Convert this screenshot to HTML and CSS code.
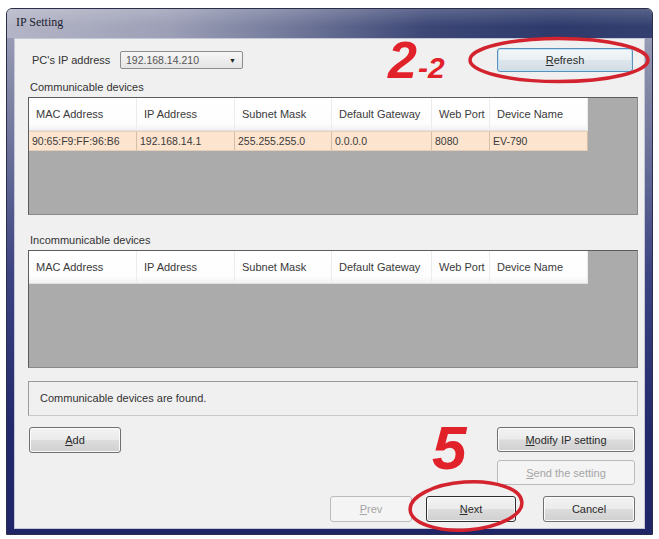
FILE: index.html
```html
<!DOCTYPE html>
<html>
<head>
<meta charset="utf-8">
<link rel="stylesheet" href="styles.css">
</head>
<body>
<div class="page">
  <div class="window">
    <div class="titlebar"><span class="title">IP Setting</span></div>
    <div class="client">
      <div class="toprow">
        <span class="lbl">PC's IP address</span>
        <div class="combo"><span>192.168.14.210</span><span class="arrow">&#9660;</span></div>
        <button class="btn refresh"><u>R</u>efresh</button>
      </div>
      <div class="section-label">Communicable devices</div>
      <div class="list">
        <div class="grid header">
          <div>MAC Address</div><div>IP Address</div><div>Subnet Mask</div><div>Default Gateway</div><div>Web Port</div><div>Device Name</div>
        </div>
        <div class="grid row">
          <div>90:65:F9:FF:96:B6</div><div>192.168.14.1</div><div>255.255.255.0</div><div>0.0.0.0</div><div>8080</div><div>EV-790</div>
        </div>
      </div>
      <div class="section-label second">Incommunicable devices</div>
      <div class="list">
        <div class="grid header">
          <div>MAC Address</div><div>IP Address</div><div>Subnet Mask</div><div>Default Gateway</div><div>Web Port</div><div>Device Name</div>
        </div>
      </div>
      <div class="status">Communicable devices are found.</div>
      <div class="actions">
        <button class="btn add"><u>A</u>dd</button>
        <div class="side">
          <button class="btn wide"><u>M</u>odify IP setting</button>
          <button class="btn wide" disabled><u>S</u>end the setting</button>
        </div>
      </div>
      <div class="nav">
        <button class="btn prev" disabled><u>P</u>rev</button>
        <button class="btn next"><u>N</u>ext</button>
        <button class="btn cancel">Cancel</button>
      </div>
    </div>
  </div>
  <svg class="ring ring1" width="184" height="48" viewBox="0 0 184 48"><ellipse cx="92" cy="24" rx="89" ry="21.5" fill="none" stroke="#d3232e" stroke-width="3.5"/></svg>
  <svg class="ring ring2" width="120" height="56" viewBox="0 0 120 56"><ellipse cx="60" cy="28" rx="56" ry="24" fill="none" stroke="#d3232e" stroke-width="3.5" transform="rotate(-4 60 28)"/></svg>
  <div class="anno a22">2<span class="small">-2</span></div>
  <div class="anno a5">5</div>
</div>
</body>
</html>
```

FILE: styles.css
```css
* { box-sizing: border-box; }
html, body { margin: 0; padding: 0; background: #ffffff; }
body { font-family: "Liberation Sans", Arial, sans-serif; font-size: 11px; color: #2a2a2a; }
.page { position: relative; width: 659px; height: 539px; overflow: hidden; }

.window {
  width: 647px;
  height: 527px;
  margin: 8px 0 0 6px;
  border: 1px solid #2b2e48;
  border-radius: 6px 6px 0 0;
  background: linear-gradient(#a3a6bc 0%, #7d82a3 18%, #3d4482 50%, #232a6c 80%, #1f2566 100%);
  padding: 0 7px 5px 7px;
  display: flex;
  flex-direction: column;
}
.titlebar {
  height: 29px;
  margin: 0 -7px;
  padding: 6px 0 0 9px;
  border-radius: 5px 5px 0 0;
  background:
    linear-gradient(rgba(255,255,255,0.18), rgba(255,255,255,0) 60%),
    linear-gradient(to right, #b4b5c6 0%, #9c9fb6 25%, #6f7698 45%, #3c4776 65%, #2d3a6b 85%, #33406f 100%);
}
.title { font-size: 12px; color: #1c1c30; font-family: "Liberation Serif", serif; }

.client {
  flex: 1;
  background: #f0f0f0;
  border: 1px solid #c4c7d6;
  padding: 9px 6px 0 13px;
  display: flex;
  flex-direction: column;
}

.toprow { display: flex; align-items: center; height: 24px; padding-left: 4px; }
.lbl { width: 88px; color: #333; }
.combo {
  width: 123px; height: 18px;
  border: 1px solid #8b8d90; border-radius: 2px;
  background: linear-gradient(#f6f6f6, #e4e4e4);
  display: flex; align-items: center; justify-content: space-between;
  padding: 0 6px 0 5px; font-size: 10.5px; color: #555;
}
.arrow { font-size: 7px; color: #222; }

.btn {
  font-family: "Liberation Sans", Arial, sans-serif;
  font-size: 11px; color: #2a2a2a;
  height: 25px;
  border: 1px solid #707070; border-radius: 3px;
  background: linear-gradient(#f3f3f3 0%, #ebebeb 48%, #dcdcdc 52%, #d0d0d0 100%);
  box-shadow: inset 0 0 0 1px #fbfbfb;
  padding: 0;
}
.btn u { text-decoration: underline; }
.btn:disabled { border-color: #b8bcbf; background: #f4f4f4; color: #a5a5a5; box-shadow: none; }
.refresh {
  margin-left: auto; margin-right: 5px;
  width: 136px; height: 24px;
  border-color: #5b8fb8;
  background: linear-gradient(#f3f7fa 0%, #e9eff3 48%, #dce5eb 52%, #d3dde4 100%);
  box-shadow: inset 0 0 0 1px #bfe3f5;
}

.section-label { margin-top: 8px; height: 15px; line-height: 15px; padding-left: 2px; color: #333; }
.section-label.second { margin-top: 18px; }

.list {
  margin-top: 2px;
  height: 118px;
  border: 1px solid #5c5c5c;
  border-right-color: #8a8a8a; border-bottom-color: #8a8a8a;
  background: #ababab;
}
.grid { display: grid; grid-template-columns: 108px 98px 97px 100px 58px 98px; width: 559px; }
.header { height: 33px; background: linear-gradient(#ffffff 0%, #fdfdfd 80%, #f1f1f1 100%); border-bottom: 1px solid #e2e2e2; }
.header > div { padding-left: 7px; line-height: 32px; border-right: 1px solid #ececec; color: #3a3a3a; }
.row { height: 20px; background: #fde4cf; border-top: 1px solid #e8d2bd; border-bottom: 1px solid #e6cfb9; }
.row > div { padding-left: 3px; line-height: 18px; border-right: 1px solid #d6bda6; font-size: 10.5px; color: #3a3a3a; }

.status {
  margin-top: 13px;
  height: 35px;
  border: 1px solid #9a9a9a;
  border-right-color: #c8c8c8; border-bottom-color: #c8c8c8;
  padding-left: 11px; line-height: 33px; color: #333;
}

.actions { display: flex; justify-content: space-between; margin-top: 11px; padding-right: 3px; }
.add { width: 92px; height: 26px; margin-left: 1px; }
.side { display: flex; flex-direction: column; gap: 8px; }
.wide { width: 138px; height: 25px; }

.nav { display: flex; justify-content: flex-end; margin-top: 11px; padding-right: 3px; }
.prev { width: 82px; height: 26px; }
.next { width: 90px; height: 26px; margin-left: 14px; border-color: #2f2f2f; }
.cancel { width: 92px; height: 26px; margin-left: 27px; }

.ring { position: absolute; }
.ring1 { left: 467px; top: 36px; }
.ring2 { left: 406px; top: 478px; }

.anno {
  position: absolute;
  font-family: "Liberation Sans", Arial, sans-serif;
  font-weight: bold; font-style: italic;
  color: #e2222b; line-height: 1;
}
.a22 { left: 388px; top: 34px; font-size: 52px; }
.a22 .small { font-size: 30px; margin-left: 1px; }
.a5 { left: 432px; top: 417px; font-size: 62px; }
```
